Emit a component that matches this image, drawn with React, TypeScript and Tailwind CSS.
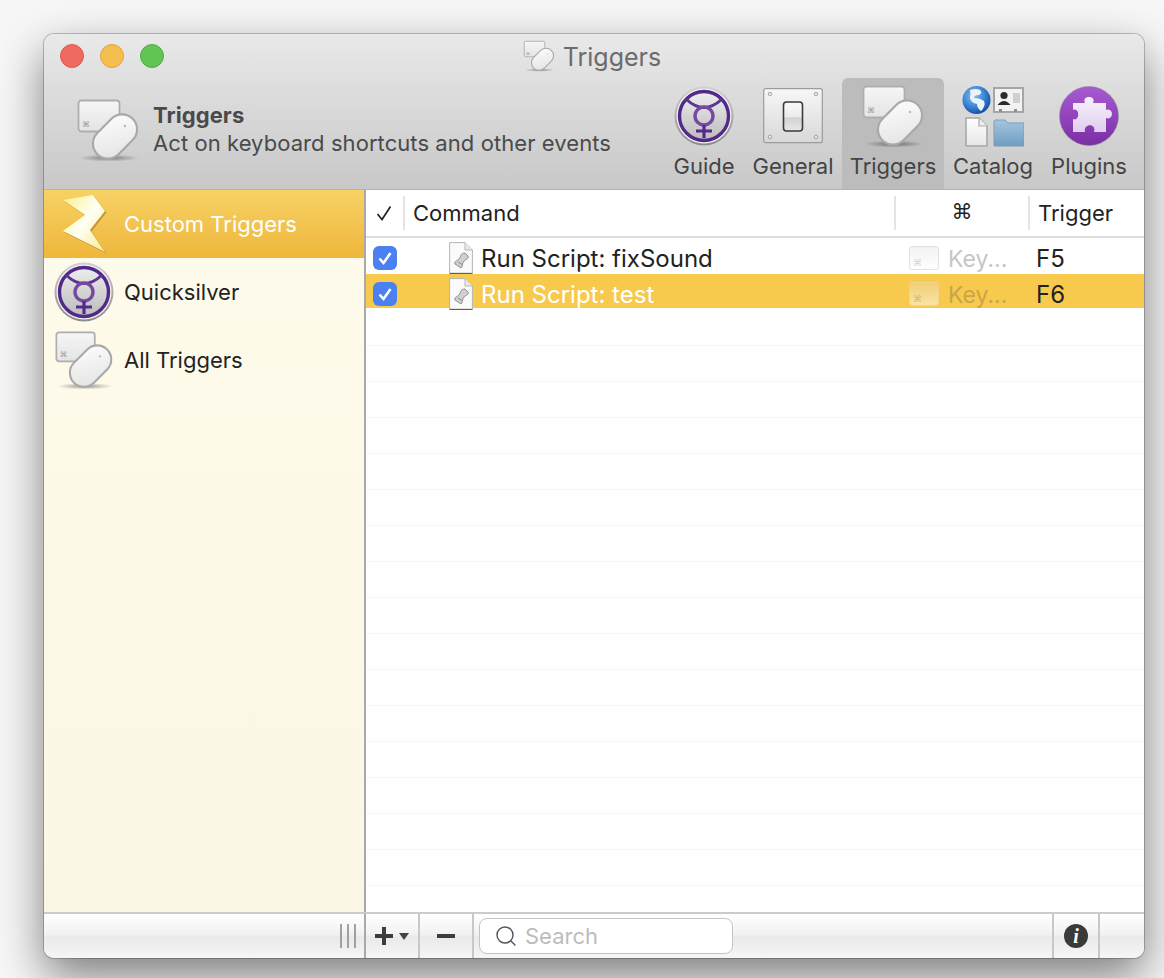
import { Search } from 'lucide-react'

function TriggersIcon({ className }: { className: string }) {
  return (
    <svg viewBox="0 0 64 64" className={className}>
      <defs>
        <linearGradient id="keyFill" x1="0" y1="0" x2="0" y2="1">
          <stop offset="0" stopColor="#f6f6f6" />
          <stop offset="1" stopColor="#e4e4e4" />
        </linearGradient>
        <linearGradient id="mouseFill" x1="0" y1="0" x2="1" y2="1">
          <stop offset="0" stopColor="#fefefe" />
          <stop offset="1" stopColor="#e2e2e2" />
        </linearGradient>
        <radialGradient id="iconShadow">
          <stop offset="0" stopColor="#000" stopOpacity="0.4" />
          <stop offset="1" stopColor="#000" stopOpacity="0" />
        </radialGradient>
      </defs>
      <ellipse cx="33" cy="60" rx="30" ry="3.5" fill="url(#iconShadow)" />
      <rect x="2.5" y="2.5" width="41" height="31" rx="3" fill="url(#keyFill)" stroke="#aeaeae" strokeWidth="1.8" />
      <text x="6" y="29" fontSize="8" fill="#9a9a9a" fontFamily="DejaVu Sans">⌘</text>
      <rect x="24" y="13.5" width="30" height="50" rx="15" transform="rotate(45 39 38.5)" fill="url(#mouseFill)" stroke="#a9a9a9" strokeWidth="2.2" />
      <circle cx="49" cy="28" r="1.2" fill="#b5b5b5" />
    </svg>
  )
}

function QuicksilverIcon({ className }: { className: string }) {
  return (
    <svg viewBox="0 0 60 60" className={className}>
      <defs>
        <linearGradient id="qsFill" x1="0" y1="0" x2="0" y2="1">
          <stop offset="0" stopColor="#ededed" />
          <stop offset="1" stopColor="#bcbcbc" />
        </linearGradient>
        <linearGradient id="qsRim" x1="0" y1="0" x2="0" y2="1">
          <stop offset="0" stopColor="#d0d0d0" />
          <stop offset="1" stopColor="#8c8c8c" />
        </linearGradient>
      </defs>
      <circle cx="30" cy="30" r="29.5" fill="url(#qsRim)" />
      <circle cx="30" cy="30" r="27.5" fill="#f1f1f1" />
      <circle cx="30" cy="30" r="24.5" fill="url(#qsFill)" stroke="#52298a" strokeWidth="3.4" />
      <path d="M12 13 Q30 30 48 13" fill="none" stroke="#5f3592" strokeWidth="3" />
      <circle cx="30" cy="30" r="9" fill="none" stroke="#74499f" strokeWidth="3.4" />
      <path d="M30 39 V52 M22 45 H38" fill="none" stroke="#55298c" strokeWidth="3.2" />
    </svg>
  )
}

function GeneralIcon({ className }: { className: string }) {
  return (
    <svg viewBox="0 0 60 56" className={className}>
      <defs>
        <linearGradient id="plateFill" x1="0" y1="0" x2="0" y2="1">
          <stop offset="0" stopColor="#f7f7f7" />
          <stop offset="1" stopColor="#d8d8d8" />
        </linearGradient>
        <linearGradient id="switchFill" x1="0" y1="0" x2="0" y2="1">
          <stop offset="0" stopColor="#fafafa" />
          <stop offset="0.5" stopColor="#ececec" />
          <stop offset="0.55" stopColor="#d2d2d2" />
          <stop offset="1" stopColor="#e8e8e8" />
        </linearGradient>
      </defs>
      <rect x="0.7" y="0.7" width="58.6" height="54" rx="2" fill="url(#plateFill)" stroke="#9b9b9b" strokeWidth="1.2" />
      {[[7, 6], [53, 6], [7, 49], [53, 49]].map(([x, y]) => (
        <circle key={`${x}-${y}`} cx={x} cy={y} r="1.8" fill="#e6e6e6" stroke="#8d8d8d" strokeWidth="0.7" />
      ))}
      <rect x="20.5" y="14" width="19" height="29" rx="3" fill="url(#switchFill)" stroke="#3a3a3a" strokeWidth="1.6" />
    </svg>
  )
}

function CatalogIcon({ className }: { className: string }) {
  return (
    <svg viewBox="0 0 62 62" className={className}>
      <defs>
        <radialGradient id="globeFill" cx="0.4" cy="0.35" r="0.7">
          <stop offset="0" stopColor="#8fc0ee" />
          <stop offset="0.55" stopColor="#3c86d6" />
          <stop offset="1" stopColor="#0f4a9e" />
        </radialGradient>
        <linearGradient id="folderFill" x1="0" y1="0" x2="0" y2="1">
          <stop offset="0" stopColor="#a4c6e0" />
          <stop offset="1" stopColor="#6f9cc0" />
        </linearGradient>
        <linearGradient id="docFill" x1="0" y1="0" x2="0" y2="1">
          <stop offset="0" stopColor="#ffffff" />
          <stop offset="1" stopColor="#e6e6e6" />
        </linearGradient>
      </defs>
      <circle cx="14.5" cy="15" r="14" fill="url(#globeFill)" />
      <path d="M8 5 Q14 3 18 5 Q21 8 17 10 Q12 10 12 13 Q18 13 22 16 Q24 21 19 26 Q15 23 15 19 Q9 18 8 13 Q9 9 8 5Z" fill="#eaf2fb" />
      <rect x="32" y="3" width="29" height="24" fill="#f2f2f2" stroke="#a5a5a5" strokeWidth="2" />
      <circle cx="42" cy="10.5" r="3.6" fill="#2c2c2c" />
      <path d="M35.5 20 Q42 12 48.5 20Z" fill="#2c2c2c" />
      <rect x="51" y="8" width="7" height="10" fill="#cfcfcf" />
      <path d="M37 27 V24 H40 V27Z M52 27 V24 H55 V27Z" fill="#8f8f8f" />
      <path d="M4 33 H17 L25 41 V61 H4Z" fill="url(#docFill)" stroke="#a8a8a8" strokeWidth="1.6" />
      <path d="M17 33 V41 H25" fill="#f0f0f0" stroke="#a8a8a8" strokeWidth="1.2" />
      <path d="M32 36 V61 H62 V38 H46 L43 35 H33Z" fill="url(#folderFill)" stroke="#7c9db8" strokeWidth="1" />
    </svg>
  )
}

function PluginsIcon({ className }: { className: string }) {
  return (
    <svg viewBox="0 0 60 60" className={className}>
      <defs>
        <linearGradient id="pluginFill" x1="0" y1="0" x2="0" y2="1">
          <stop offset="0" stopColor="#a85ad2" />
          <stop offset="1" stopColor="#7a2ea4" />
        </linearGradient>
        <linearGradient id="pieceFill" x1="0" y1="0" x2="0" y2="1">
          <stop offset="0" stopColor="#f8f2fc" />
          <stop offset="1" stopColor="#dfcdee" />
        </linearGradient>
      </defs>
      <circle cx="30" cy="30" r="29.5" fill="url(#pluginFill)" stroke="#8d8d8d" strokeWidth="0.6" />
      <path
        d="M14 17 H26 C22 9 38 9 34 17 H47 V24 C55 21 55 35 47 32 V46 H35 C38 37 24 37 26 46 H14 V33 C21 36 21 21 14 24Z"
        fill="url(#pieceFill)"
      />
    </svg>
  )
}

function BoltIcon({ className }: { className: string }) {
  return (
    <svg viewBox="0 0 56 64" className={className}>
      <defs>
        <linearGradient id="boltFill" x1="0" y1="0" x2="1" y2="1">
          <stop offset="0" stopColor="#fbf08a" />
          <stop offset="0.5" stopColor="#fffff4" />
          <stop offset="1" stopColor="#f8ea8c" />
        </linearGradient>
      </defs>
      <path d="M5 8 L35 3 L47 19 L32 38 L47 60 L5 39 L27 23Z" fill="#a67c1e" opacity="0.6" transform="translate(1.5 1.5)" />
      <path d="M5 8 L35 3 L47 19 L32 38 L47 60 L5 39 L27 23Z" fill="url(#boltFill)" />
    </svg>
  )
}

function ScriptIcon() {
  return (
    <svg viewBox="0 0 24 32" className="h-8 w-6 shrink-0">
      <path d="M0.6 0.6 H16 L23.4 8 V31.4 H0.6Z" fill="#fafafa" stroke="#b4b4b4" strokeWidth="1" />
      <path d="M0.6 31.4 H23.4" stroke="#555" strokeWidth="1" />
      <path d="M16 0.6 V8 H23.4" fill="#e8e8e8" stroke="#b8b8b8" strokeWidth="1" />
      <path d="M16 11 C11 11 12 15 10 17 C8 19 5 19 6 22 L12 26 C14 24 13 21 15 19 C17 17 20 17 19 14Z" fill="#cfcfcf" stroke="#8e8e8e" strokeWidth="1" />
      <path d="M9 20 L14 23" stroke="#8e8e8e" strokeWidth="1" />
    </svg>
  )
}

function CheckBox() {
  return (
    <div className="flex h-6 w-6 items-center justify-center rounded-[6px] bg-[#4a80ef]">
      <svg viewBox="0 0 24 24" className="h-6 w-6">
        <path d="M6.5 12.5 L10.5 17 L17.5 7" fill="none" stroke="#fff" strokeWidth="2.6" />
      </svg>
    </div>
  )
}

function KeyBox({ selected }: { selected: boolean }) {
  return (
    <div
      className={`flex h-6 w-[30px] items-end rounded-[3px] border pb-[1px] pl-[3px] text-[9px] leading-none ${
        selected
          ? 'border-[#f0d68c] bg-gradient-to-b from-[#f0cf74] to-[#fae3a4] text-[#cfb878]'
          : 'border-[#e2e2e2] bg-gradient-to-b from-[#f2f2f2] to-white text-[#d4d4d4]'
      }`}
    >
      <span className="font-['DejaVu_Sans',sans-serif]">⌘</span>
    </div>
  )
}

const rows = [
  { name: 'Run Script: fixSound', trigger: 'F5', selected: false },
  { name: 'Run Script: test', trigger: 'F6', selected: true },
]

const tools = [
  { label: 'Guide', width: 'w-[80px]', icon: <QuicksilverIcon className="h-[60px] w-[60px]" />, active: false },
  { label: 'General', width: 'w-[98px]', icon: <GeneralIcon className="h-[56px] w-[60px]" />, active: false },
  { label: 'Triggers', width: 'w-[102px]', icon: <TriggersIcon className="h-[64px] w-[64px]" />, active: true },
  { label: 'Catalog', width: 'w-[98px]', icon: <CatalogIcon className="h-[62px] w-[62px]" />, active: false },
  { label: 'Plugins', width: 'w-[94px]', icon: <PluginsIcon className="h-[60px] w-[60px]" />, active: false },
]

const sidebar = [
  { label: 'Quicksilver', icon: <QuicksilverIcon className="h-[60px] w-[60px]" /> },
  { label: 'All Triggers', icon: <TriggersIcon className="h-[60px] w-[60px]" /> },
]

export default function App() {
  return (
    <div className="h-[978px] w-[1164px] overflow-hidden bg-[#f7f7f7] pl-[44px] pt-[34px] font-['Inter',sans-serif] text-[22px] text-[#222]">
      <div className="flex h-[924px] w-[1100px] flex-col overflow-hidden rounded-[10px] bg-white shadow-[0_0_0_1px_rgba(0,0,0,0.22),0_18px_46px_rgba(0,0,0,0.5)]">
        {/* Title bar + toolbar */}
        <header className="h-[156px] shrink-0 border-b border-[#b3b3b3] bg-gradient-to-b from-[#e9e9e9] to-[#c8c8c8]">
          <div className="grid h-[44px] grid-cols-[1fr_auto_1fr] items-center px-[16px]">
            <div className="flex gap-4">
              <span className="h-6 w-6 rounded-full border border-[#dd5b52] bg-[#ee6a5f]" />
              <span className="h-6 w-6 rounded-full border border-[#dfa43a] bg-[#f5bf4f]" />
              <span className="h-6 w-6 rounded-full border border-[#4fae44] bg-[#61c554]" />
            </div>
            <div className="flex items-center gap-2 pr-[4px] text-[25px] text-[#6b6b6b]">
              <TriggersIcon className="h-8 w-8" />
              <span className="pt-[3px]">Triggers</span>
            </div>
            <div />
          </div>
          <div className="flex h-[111px] items-stretch">
            <div className="flex flex-1 items-center pb-[7px] pl-[32px] text-[#4a4a4a]">
              <TriggersIcon className="h-[64px] w-[64px] shrink-0" />
              <div className="mb-[3px] ml-[13px] leading-[28px] tracking-[0.07px]">
                <div className="font-bold">Triggers</div>
                <div>Act on keyboard shortcuts and other events</div>
              </div>
            </div>
            <div className="flex pr-[8px]">
              {tools.map((tool) => (
                <div
                  key={tool.label}
                  className={`flex flex-col items-center rounded-t-[6px] ${tool.width} ${tool.active ? 'bg-[#bcbcbc]' : ''}`}
                >
                  <div className="flex h-[72px] items-center justify-center pt-[3px]">{tool.icon}</div>
                  <div className="text-[#444]">{tool.label}</div>
                </div>
              ))}
            </div>
          </div>
        </header>

        <div className="flex min-h-0 flex-1">
          {/* Sidebar */}
          <aside className="flex w-[320px] shrink-0 flex-col bg-gradient-to-b from-[#fefbec] to-[#fbf7e5]">
            <div className="flex h-[68px] items-center bg-gradient-to-b from-[#f7d264] to-[#eeb63a] pl-[14px] text-white">
              <BoltIcon className="h-[64px] w-[56px]" />
              <span className="ml-[10px]">Custom Triggers</span>
            </div>
            {sidebar.map((item) => (
              <div key={item.label} className="flex h-[68px] items-center pl-[10px]">
                {item.icon}
                <span className="ml-[10px]">{item.label}</span>
              </div>
            ))}
          </aside>

          {/* Table */}
          <main className="flex min-w-0 flex-1 flex-col border-l-2 border-[#a9a9a9]">
            <div className="grid h-[48px] shrink-0 grid-cols-[37px_491px_134px_1fr] items-center border-b-2 border-[#dcdcdc]">
              <div className="flex justify-center pr-[2px]">
                <svg viewBox="0 0 16 16" className="h-4 w-4">
                  <path d="M1.5 9 L6 14.5 L14.5 1.5" fill="none" stroke="#222" strokeWidth="1.7" />
                </svg>
              </div>
              <div className="flex h-[34px] items-center border-l-2 border-[#e4e4e4] pl-[8px]">Command</div>
              <div className="flex h-[34px] items-center justify-center border-l-2 border-[#e4e4e4] font-['DejaVu_Sans',sans-serif] text-[21px]">⌘</div>
              <div className="flex h-[34px] items-center border-l-2 border-[#e4e4e4] pl-[8px]">Trigger</div>
            </div>
            {rows.map((row) => (
              <div
                key={row.name}
                className={`grid grid-cols-[37px_491px_134px_1fr] items-center ${row.selected ? 'h-[34px] bg-[#f7ca4e]' : 'h-[36px]'}`}
              >
                <div className="flex justify-center">
                  <CheckBox />
                </div>
                <div className={`flex items-center gap-2 pl-[46px] text-[24px] ${row.selected ? 'text-white' : ''}`}>
                  <ScriptIcon />
                  <span className="pt-[3px]">{row.name}</span>
                </div>
                <div className="flex items-center gap-[9px] pl-[15px] text-[23px]">
                  <KeyBox selected={row.selected} />
                  <span className={`pt-[3px] ${row.selected ? 'text-[#c9a547]' : 'text-[#c6c6c6]'}`}>Key...</span>
                </div>
                <div className="pl-[8px] pt-[3px] text-[24px]">{row.trigger}</div>
              </div>
            ))}
            <div className="min-h-0 flex-1 overflow-hidden">
              {Array.from({ length: 17 }, (_, i) => (
                <div key={i} className={`border-b border-[#f1faf1] ${i === 0 ? 'h-[38px]' : 'h-[36px]'}`} />
              ))}
            </div>
          </main>
        </div>

        {/* Bottom bar */}
        <footer className="flex h-[46px] shrink-0 items-stretch border-t-2 border-[#cbcbcb] bg-[linear-gradient(#ffffff,#f1f1f1_48%,#e9e9e9_50%,#f6f6f6)]">
          <div className="flex w-[320px] shrink-0 items-center justify-end gap-[5px] pr-[8px]">
            <span className="h-6 w-[2px] bg-[#a0a0a0]" />
            <span className="h-6 w-[2px] bg-[#a0a0a0]" />
            <span className="h-6 w-[2px] bg-[#a0a0a0]" />
          </div>
          <div className="flex w-[54px] items-center gap-[6px] border-l-2 border-[#a9a9a9] pl-[9px]">
            <svg viewBox="0 0 18 18" className="h-[18px] w-[18px]">
              <path d="M9 0 V18 M0 9 H18" stroke="#3c3c3c" strokeWidth="4" />
            </svg>
            <svg viewBox="0 0 10 7" className="h-[7px] w-[10px]">
              <path d="M0 0 H10 L5 7Z" fill="#444" />
            </svg>
          </div>
          <div className="flex w-[54px] items-center justify-center border-l-2 border-[#c8c8c8]">
            <span className="h-1 w-[18px] bg-[#3c3c3c]" />
          </div>
          <div className="flex flex-1 items-center border-l-2 border-[#c8c8c8] pl-[5px]">
            <div className="flex h-9 w-[254px] items-center rounded-[8px] border border-[#c4c4c4] bg-white pl-[14px] text-[#bcbcbc]">
              <Search className="h-6 w-6 text-[#555]" strokeWidth={1.4} />
              <span className="ml-[7px]">Search</span>
            </div>
          </div>
          <div className="flex w-[46px] items-center justify-center border-l-2 border-[#c8c8c8]">
            <span className="flex h-6 w-6 items-center justify-center rounded-full bg-[#3a3a3a] font-['Liberation_Serif',serif] text-[20px] font-bold italic leading-none text-white">
              i
            </span>
          </div>
          <div className="w-[46px] border-l-2 border-[#c8c8c8]" />
        </footer>
      </div>
    </div>
  )
}
